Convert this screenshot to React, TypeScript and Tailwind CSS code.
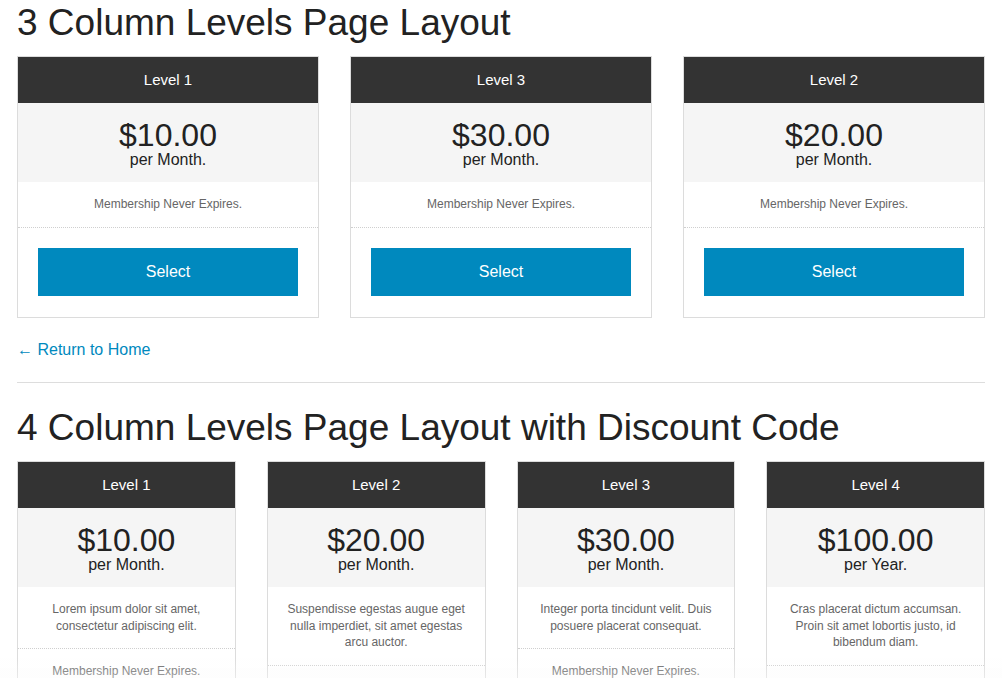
const threeCol = [
  { name: 'Level 1', price: '$10.00', period: 'per Month.' },
  { name: 'Level 3', price: '$30.00', period: 'per Month.' },
  { name: 'Level 2', price: '$20.00', period: 'per Month.' },
];

const fourCol = [
  { name: 'Level 1', price: '$10.00', period: 'per Month.', desc: 'Lorem ipsum dolor sit amet, consectetur adipiscing elit.' },
  { name: 'Level 2', price: '$20.00', period: 'per Month.', desc: 'Suspendisse egestas augue eget nulla imperdiet, sit amet egestas arcu auctor.' },
  { name: 'Level 3', price: '$30.00', period: 'per Month.', desc: 'Integer porta tincidunt velit. Duis posuere placerat consequat.' },
  { name: 'Level 4', price: '$100.00', period: 'per Year.', desc: 'Cras placerat dictum accumsan. Proin sit amet lobortis justo, id bibendum diam.' },
];

type Level = { name: string; price: string; period: string; desc?: string };

function LevelCard({ level }: { level: Level }) {
  return (
    <div className="border border-[#dcdcdc] bg-white text-center">
      <div className="h-[46px] bg-[#333333] text-white text-[15px] leading-[46px]">{level.name}</div>
      <div className="bg-[#f5f5f5] pt-[17px] pb-[14px] text-[#222]">
        <div className="text-[32px] leading-[31px]">{level.price}</div>
        <div className="text-[16px] leading-[17px]">{level.period}</div>
      </div>
      {level.desc && (
        <div className="border-b border-dotted border-[#cfcfcf] px-4 py-[14px] text-[12px] leading-[16.5px] text-[#666]">
          {level.desc}
        </div>
      )}
      <div className="border-b border-dotted border-[#cfcfcf] py-[14px] text-[12px] leading-[17px] text-[#666]">
        Membership Never Expires.
      </div>
      <div className="px-[20px] pt-[20px] pb-[21px]">
        <button className="h-[48px] w-full bg-[#0089be] text-[16px] text-white">Select</button>
      </div>
    </div>
  );
}

export default function App() {
  return (
    <div className="min-h-screen bg-white px-[17px] text-[#222]" style={{ fontFamily: '"Liberation Sans", Arial, sans-serif' }}>
      <h1 className="pt-[1px] mb-[11px] text-[37px] leading-[44px] font-normal">3 Column Levels Page Layout</h1>
      <div className="grid grid-cols-3 gap-[31px]">
        {threeCol.map((l) => (
          <LevelCard key={l.name} level={l} />
        ))}
      </div>
      <div className="mt-[20px] text-[16px] leading-[24px]">
        <a className="text-[#0089be]" href="#">← Return to Home</a>
      </div>
      <hr className="mt-[20px] border-0 border-t border-[#dddddd]" />
      <h2 className="mt-[23px] mb-[11px] text-[37px] leading-[44px] font-normal">4 Column Levels Page Layout with Discount Code</h2>
      <div className="grid grid-cols-4 gap-[31px]">
        {fourCol.map((l) => (
          <LevelCard key={l.name} level={l} />
        ))}
      </div>
      <div className="pointer-events-none fixed inset-x-0 bottom-0 h-[20px] bg-linear-to-b from-transparent to-[#fafafa]/40" />
    </div>
  );
}
